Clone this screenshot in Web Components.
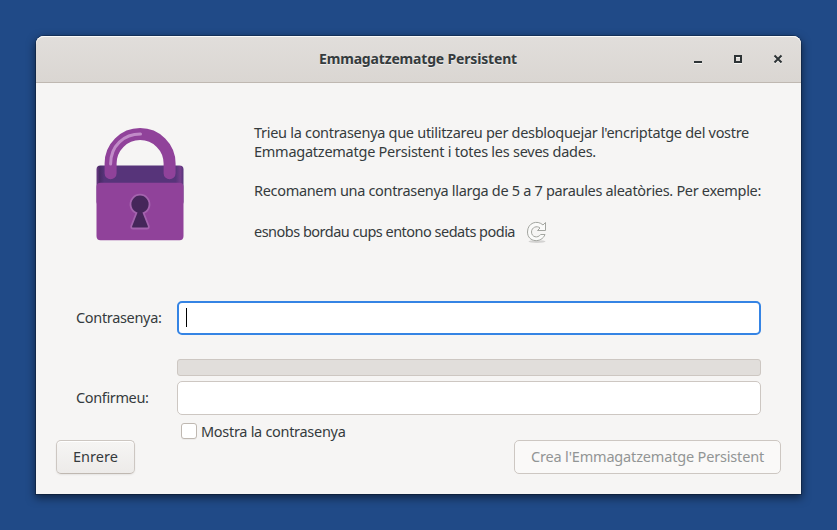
<!DOCTYPE html>
<html lang="ca"><head><meta charset="utf-8"><title>Emmagatzematge Persistent</title>
<style>
html,body{margin:0;height:100%}
body{background:#204a87;overflow:hidden;display:flex;justify-content:center;padding-top:36px;box-sizing:border-box;font:14.5px/20px "Noto Sans","Open Sans",sans-serif;color:#353b3d}
.gap{margin-bottom:20px}
</style></head><body>
<dialog-window>
<title-bar slot="header"><fit-text w="198">Emmagatzematge Persistent</fit-text></title-bar>
<intro-panel slot="body">
<pad-lock slot="icon"></pad-lock>
<fit-text w="495">Trieu la contrasenya que utilitzareu per desbloquejar l'encriptatge del vostre</fit-text>
<fit-text w="342" class="gap">Emmagatzematge Persistent i totes les seves dades.</fit-text>
<fit-text w="507">Recomanem una contrasenya llarga de 5 a 7 paraules aleatòries. Per exemple:</fit-text>
<example-row><fit-text w="261">esnobs bordau cups entono sedats podia</fit-text></example-row>
</intro-panel>
<password-form slot="body"></password-form>
<action-bar slot="footer">
<push-button><fit-text w="45">Enrere</fit-text></push-button>
<push-button disabled><fit-text w="233">Crea l'Emmagatzematge Persistent</fit-text></push-button>
</action-bar>
</dialog-window>
<script>
const define=(name,html,setup)=>customElements.define(name,class extends HTMLElement{
  connectedCallback(){
    if(this.shadowRoot)return;
    this.attachShadow({mode:'open'}).innerHTML=html;
    if(setup)setup(this);
  }
});

define('dialog-window',`<style>
:host{display:flex;flex-direction:column;width:765px;height:458px;background:#f6f5f4;border-radius:8px 8px 0 0;box-shadow:0 3px 9px 1px rgba(0,0,0,.5),0 0 0 1px rgba(0,0,0,.23)}
main{flex:1}
</style><slot name="header"></slot><main><slot name="body"></slot></main><slot name="footer"></slot>`);

define('title-bar',`<style>
:host{--lift:0px;display:grid;grid-template-columns:1fr auto 1fr;align-items:center;height:47px;box-sizing:border-box;padding-right:1px;border-bottom:1px solid #bfb8b1;border-radius:8px 8px 0 0;background:linear-gradient(#e1dedb,#dad6d2);box-shadow:inset 0 1px #fafaf9;font-size:14px;font-weight:700;text-shadow:0 1px rgba(255,255,255,.6)}
svg{justify-self:end;margin-right:16px}
</style><span></span><slot></slot><svg width="92" height="12" viewBox="0 0 92 12" fill="none" stroke-width="2">
<g stroke="#f5f4f2" transform="translate(0 1)"><path d="M2 9H10M43 3H49V9H43Z"/><path d="M82.5 2.5L89.5 9.5M89.5 2.5L82.5 9.5"/></g>
<g stroke="#2e3436"><path d="M2 9H10M43 3H49V9H43Z"/><path d="M82.5 2.5L89.5 9.5M89.5 2.5L82.5 9.5"/></g></svg>`);

define('intro-panel',`<style>
:host{display:flex;height:218px}
.icon{width:218px;flex:none;box-sizing:border-box;padding:44px 0 0 60px}
.copy{padding-top:39.5px;display:flex;flex-direction:column;align-items:flex-start}
::slotted(fit-text){--line:19.4px;--lift:0px}
</style><div class="icon"><slot name="icon"></slot></div><div class="copy"><slot></slot></div>`);

define('example-row',`<style>
:host{display:flex;align-items:center;gap:11px;margin-top:19px;height:24px}
svg{display:block}
</style><slot></slot><svg width="22" height="24" viewBox="0 0 22 24">
<ellipse cx="11" cy="21.6" rx="8.5" ry="1.4" fill="#000" opacity=".14"/>
<path d="M19.5 2.5V10.5H11.5L14 8C11 5.3 5.5 7.2 5.5 12C5.5 17.2 11.8 18.6 14.6 14.5H19C15.8 23.4 1.5 22.6 1.5 12C1.5 2.7 11.3-.4 17 5Z" fill="#fafaf9" stroke="#a3a5a0"/></svg>`);

define('pad-lock',`<style>:host{display:block}svg{display:block}</style>
<svg width="88" height="114" viewBox="0 0 88 114">
<defs><linearGradient id="b"><stop stop-color="#6c3a84"/><stop offset=".035" stop-color="#492b66"/><stop offset=".09" stop-color="#57347a"/><stop offset=".91" stop-color="#57347a"/><stop offset=".965" stop-color="#743d8b"/><stop offset="1" stop-color="#57347a"/></linearGradient></defs>
<rect x=".5" y="38.5" width="87" height="40" rx="4" fill="url(#b)"/>
<path d="M.5 60Q.5 55.7 4.5 55.7H83.5Q87.5 55.7 87.5 60V109Q87.5 113.2 83.5 113.2H4.5Q.5 113.2 .5 109Z" fill="#90429a"/>
<path d="M14.6 46.2V36.5A29.5 29.5 0 0 1 73.6 36.5V46.2" fill="none" stroke="#90429a" stroke-width="12" stroke-linecap="round"/>
<path d="M14.6 37C14.6 18.5 28 7 44.5 7" fill="none" stroke="#c18bc8" stroke-width="3" stroke-linecap="round"/>
<path d="M40.4 86A9.5 9.5 0 1 1 47.6 86L52.7 99Q53.3 101.5 50.8 101.5H37.2Q34.7 101.5 35.3 99Z" fill="#45265a" stroke="#a463ae" stroke-width="1.8"/>
</svg>`);

define('text-entry',`<style>
:host{display:flex;align-items:center;height:34px;box-sizing:border-box;background:#fff;border:1px solid #cdc7c2;border-radius:5px}
:host([focused]){border:2px solid #3584e4;padding:0 0 1px 7px}
i{display:none;width:1px;height:19px;background:#000}
:host([focused]) i{display:block}
</style><i></i>`);

define('strength-meter',`<style>:host{display:block;height:17px;box-sizing:border-box;background:#e1dedb;border:1px solid #cdc7c2;border-radius:3px}</style>`);

define('check-option',`<style>
:host{display:flex;align-items:center;gap:4px;padding-left:4px;height:20px}
i{width:16px;height:16px;box-sizing:border-box;border:1px solid #bfb8b1;border-radius:3px;background:#fff;box-shadow:0 1px rgba(0,0,0,.04);margin-bottom:2px}
</style><i></i><slot></slot>`);

define('password-form',`<style>
:host{display:grid;grid-template-columns:101px 584px;grid-template-rows:34px 14px 17px 34px 20px;row-gap:5px;padding-left:40px;align-items:center}
text-entry,strength-meter,check-option{grid-column:2;min-width:0}
strength-meter{grid-row:3}
.confirm{grid-row:4}
check-option{grid-row:5;margin-top:3px}
</style><fit-text w="85.5">Contrasenya:</fit-text><text-entry focused></text-entry>
<strength-meter></strength-meter>
<fit-text class="confirm" w="72.5">Confirmeu:</fit-text><text-entry class="confirm"></text-entry>
<check-option><fit-text w="144.5">Mostra la contrasenya</fit-text></check-option>`);

define('action-bar',`<style>:host{display:flex;justify-content:space-between;padding:0 20px 20px}</style><slot></slot>`);

define('push-button',`<style>
:host{display:flex;align-items:center;height:34px;padding:0 16px;box-sizing:border-box;border:1px solid #cdc7c2;border-bottom-color:#bfb8b1;border-radius:5px;background:linear-gradient(#f6f5f4,#edebe9);box-shadow:inset 0 1px #fff,0 1px 2px rgba(0,0,0,.07)}
:host([disabled]){color:#929595;background:#faf9f8;border-color:#cdc7c2;box-shadow:none}
</style><slot></slot>`);

// Text of a fixed measure: the tracking is adjusted until the line fills it.
define('fit-text',`<style>:host{display:block;white-space:pre;line-height:var(--line,18px);padding-bottom:var(--lift,2px)}span{display:inline-block}</style><span><slot></slot></span>`,el=>{
  const w=+el.getAttribute('w'),s=el.shadowRoot.querySelector('span');
  el.style.width=w+'px';
  s.style.letterSpacing=(w-s.getBoundingClientRect().width)/el.textContent.length+'px';
});
</script></body></html>
